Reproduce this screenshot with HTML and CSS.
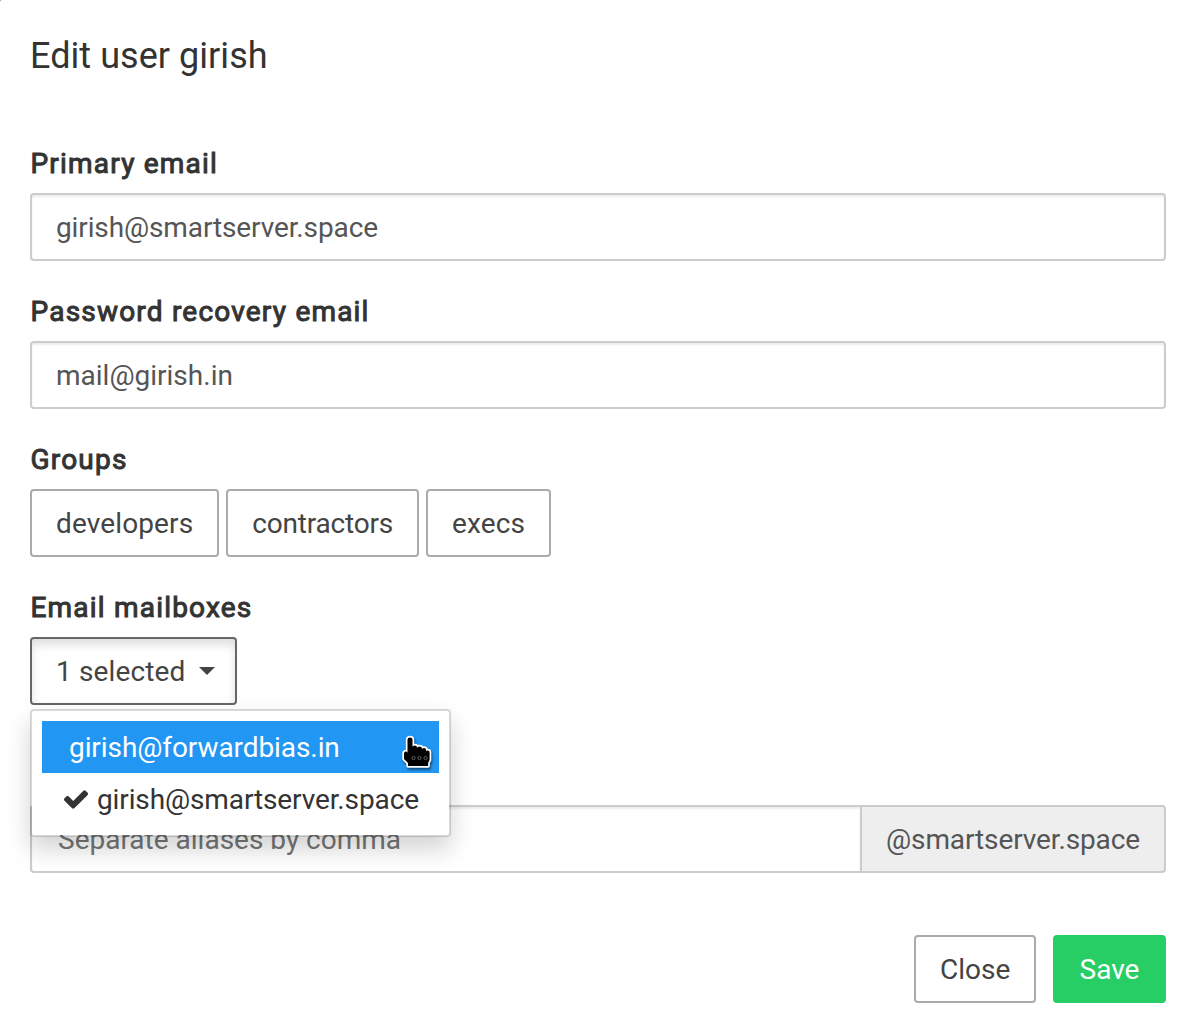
FILE: index.html
```html
<!DOCTYPE html>
<html lang="en">
<head>
<meta charset="utf-8">
<title>Edit user</title>
<link rel="stylesheet" href="styles.css">
</head>
<body>
<main class="modal">
  <h4 class="modal-title">Edit user girish</h4>
  <form class="modal-body">
    <div class="form-group">
      <label class="label" for="email">Primary email</label>
      <input class="input tight" id="email" type="text" value="girish@smartserver.space">
    </div>
    <div class="form-group">
      <label class="label" for="recovery">Password recovery email</label>
      <input class="input" id="recovery" type="text" value="mail@girish.in">
    </div>
    <div class="form-group">
      <div class="label">Groups</div>
      <div class="groups">
        <button class="btn loose" type="button">developers</button>
        <button class="btn tighter" type="button">contractors</button>
        <button class="btn loose" type="button">execs</button>
      </div>
    </div>
    <div class="form-group">
      <div class="label">Email mailboxes</div>
      <div class="dropdown">
        <button class="btn btn-open loose" type="button">1 selected<span class="caret"></span></button>
        <ul class="menu">
          <li class="item item-active tight">girish@forwardbias.in
            <svg class="pointer" width="38" height="38" viewBox="0 0 38 38">
              <path d="M9.500 21V7.500q0-2 2.500-2t2.500 2v7.500q0-1.500 2.300-1.500T19 15.500v.5q0-1.500 2.500-1.500T24 16.500v1q0-1.500 2-1.500t2 2v1.500q0-1 1.800-1t1.800 2V28l-1.500 3v3H10V31l-4-4v-5.500q0-2 2-2 1.500 0 1.500 1.500z"/>
              <g class="pointer-dots"><circle cx="15.500" cy="26" r="1.600"/><circle cx="21.500" cy="26" r="1.600"/><circle cx="27.500" cy="26" r="1.600"/></g>
            </svg>
          </li>
          <li class="item item-checked tight"><svg class="check" width="28" height="28" viewBox="0 0 1792 1792"><path d="M1671 566q0 40-28 68l-724 724-136 136q-28 28-68 28t-68-28l-136-136-362-362q-28-28-28-68t28-68l136-136q28-28 68-28t68 28l294 295 656-657q28-28 68-28t68 28l136 136q28 28 28 68z"/></svg><span>girish@smartserver.space</span></li>
        </ul>
      </div>
    </div>
    <div class="input-group">
      <input class="input input-left" type="text" placeholder="Separate aliases by comma">
      <span class="addon tight">@smartserver.space</span>
    </div>
  </form>
  <footer class="modal-footer">
    <button class="btn btn-close" type="button">Close</button>
    <button class="btn btn-save" type="button">Save</button>
  </footer>
</main>
</body>
</html>
```
FILE: styles.css
```css
* { box-sizing: border-box; }
html { background: #888; }
body {
  margin: 0;
  font: 28px/40px Roboto, sans-serif;
  color: #333;
}
.modal {
  height: 1031px;
  padding: 36px 27px 0 30px;
  background: #fff;
  border-top-left-radius: 2px;
}
.modal-title { margin: 0; font-size: 36px; font-weight: 400; line-height: 40px; letter-spacing: .05px; }
.modal-body { padding-top: 68px; }
.form-group { margin-bottom: 31px; }
.label {
  display: block;
  margin-bottom: 9px;
  padding-left: .5px;
  letter-spacing: 1.2px;
  -webkit-text-stroke: 1px #333;
}
.input {
  display: block;
  width: 100%;
  height: 68px;
  padding: 12px 24px;
  border: 2px solid #ccc;
  border-radius: 4px;
  background: #fff;
  box-shadow: inset 0 2px 2px rgba(0, 0, 0, .075);
  font: inherit;
  color: #555;
  outline: 0;
}
.input::placeholder { color: #757575; opacity: 1; }
.groups { display: flex; gap: 7px; }
.btn {
  height: 68px;
  padding: 13px 24px 11px;
  border: 2px solid #aaa;
  border-radius: 4px;
  background: #fff;
  font: inherit;
  color: #444;
  white-space: nowrap;
}
.tight { letter-spacing: -.12px; }
.tighter { letter-spacing: -.2px; }
.loose { letter-spacing: .13px; }
.dropdown { position: relative; height: 68px; }
.btn-open {
  display: flex;
  align-items: center;
  width: 207px;
  padding-right: 20px;
  border-color: #666;
  box-shadow: inset 0 6px 10px rgba(0, 0, 0, .125);
}
.caret {
  margin: -2px 0 0 14px;
  border-top: 8px solid #444;
  border-left: 8px solid transparent;
  border-right: 8px solid transparent;
}
.menu {
  position: absolute;
  z-index: 1;
  top: 72px;
  left: 0;
  width: 421px;
  margin: 0;
  padding: 10px;
  border: 2px solid rgba(0, 0, 0, .15);
  border-radius: 4px;
  background: #fff;
  background-clip: padding-box;
  box-shadow: 0 12px 24px rgba(0, 0, 0, .175);
  list-style: none;
}
.item { position: relative; height: 52px; padding: 7px 27px 5px; }
.item-active { background: #2196f3; color: #fff; letter-spacing: -.08px; }
.item-checked { display: flex; align-items: center; gap: 7px; padding-left: 20px; }
.check { flex: none; margin-top: -2px; fill: #333; }
.pointer {
  position: absolute;
  top: 11px;
  left: 356px;
  fill: #000;
  stroke: #fff;
  stroke-width: 3.4;
  stroke-linejoin: round;
  paint-order: stroke;
  filter: drop-shadow(1px 2px 1px rgba(0, 0, 0, .5));
}
.pointer-dots { fill: none; stroke: #777; stroke-width: .8; }
.input-group { display: flex; padding-top: 69px; }
.input-left { flex: 1; padding-left: 26px; border-right: 0; border-radius: 4px 0 0 4px; }
.addon {
  height: 68px;
  padding: 13px 24px 11px;
  border: 2px solid #ccc;
  border-radius: 0 4px 4px 0;
  background: #eee;
  color: #555;
}
.modal-footer { display: flex; justify-content: flex-end; gap: 17px; padding-top: 62px; }
.btn-close { width: 122px; }
.btn-save { width: 113px; border-color: #27ce65; background: #27ce65; color: #fff; }
```
